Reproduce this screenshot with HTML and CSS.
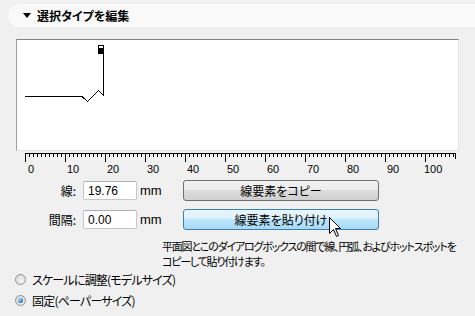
FILE: index.html
```html
<!DOCTYPE html>
<html lang="ja">
<head>
  <meta charset="UTF-8" />
  <title>選択タイプを編集</title>
  <link rel="stylesheet" href="styles.css">
</head>
<body>
  <div class="panel-head">
    <span class="caret"></span>
    <span class="panel-title">選択タイプを編集</span>
  </div>

  <div class="preview">
    <svg width="441" height="110" viewBox="0 0 441 110">
      <polyline points="8,56.5 65,56.5 70.5,61.5 81.5,50.5 87.5,56.5" fill="none" stroke="#000" stroke-width="1" />
      <line x1="86.5" y1="13" x2="86.5" y2="56" stroke="#000" stroke-width="1" />
      <rect x="81.5" y="5.5" width="5" height="3" fill="#fff" stroke="#000" stroke-width="1" />
      <rect x="81" y="9" width="6" height="5" fill="#000" />
    </svg>
  </div>

  <svg class="ruler" width="475" height="24" viewBox="0 0 475 24">
    <defs>
      <pattern id="minor" x="25" y="1" width="4" height="4" patternUnits="userSpaceOnUse">
        <rect x="0" y="0" width="1" height="4" fill="#000" />
      </pattern>
      <pattern id="major" x="25" y="1" width="40" height="9" patternUnits="userSpaceOnUse">
        <rect x="0" y="0" width="1" height="9" fill="#000" />
      </pattern>
    </defs>
    <rect x="25" y="1" width="430" height="1" fill="#000" />
    <rect x="25" y="1" width="430" height="4" fill="url(#minor)" />
    <rect x="25" y="1" width="401" height="9" fill="url(#major)" />
    <rect x="455" y="1" width="1" height="6" fill="#000" />
    <g class="ruler-nums">
      <text x="28" y="21">0</text>
      <text x="67" y="21">10</text>
      <text x="107" y="21">20</text>
      <text x="147" y="21">30</text>
      <text x="187" y="21">40</text>
      <text x="227" y="21">50</text>
      <text x="267" y="21">60</text>
      <text x="307" y="21">70</text>
      <text x="347" y="21">80</text>
      <text x="387" y="21">90</text>
      <text x="424" y="21">100</text>
    </g>
  </svg>

  <div class="fields">
    <div class="field-row">
      <label class="field-label" for="lineLen">線:</label>
      <input class="num-input" id="lineLen" value="19.76">
      <span class="unit">mm</span>
      <button class="btn">線要素をコピー</button>
    </div>
    <div class="field-row">
      <label class="field-label" for="gapLen">間隔:</label>
      <input class="num-input" id="gapLen" value="0.00">
      <span class="unit">mm</span>
      <div class="btn-wrap">
        <button class="btn btn-hot">線要素を貼り付け</button>
        <svg class="cursor" width="13" height="20" viewBox="0 0 13 20">
          <path d="M0.5,0.5 L0.5,16.5 L4.5,12.5 L7.5,19.5 L9.5,18.5 L6.5,11.5 L11.5,11.5 Z" fill="#fff" stroke="#000" stroke-width="1" stroke-linejoin="miter" />
        </svg>
      </div>
    </div>
  </div>

  <p class="hint">平面図とこのダイアログボックスの間で線、円弧、およびホットスポットを<br>コピーして貼り付けます。</p>

  <div class="radios">
    <label class="radio-row"><span class="radio"></span>スケールに調整(モデルサイズ)</label>
    <label class="radio-row"><span class="radio checked"></span>固定(ペーパーサイズ)</label>
  </div>
</body>
</html>
```

FILE: styles.css
```css
body { margin: 0; background: #f0f0f0; font-family: "Liberation Sans", "Noto Sans CJK JP", sans-serif; font-size: 12px; color: #000; overflow: hidden; }
.panel-head { display: flex; align-items: center; margin: 4px 0 0 8px; height: 23px; padding-left: 15px; background: #f9f9f9; border-radius: 12px 0 0 12px; }
.caret { width: 0; height: 0; border-left: 4px solid transparent; border-right: 4px solid transparent; border-top: 5px solid #000; margin-right: 6px; }
.panel-title { font-family: "Noto Sans CJK JP", sans-serif; font-weight: bold; font-size: 12px; font-feature-settings: "palt"; }
.preview { margin: 12px 0 0 16px; width: 441px; height: 110px; background: #fff; border: 1px solid; border-color: #828282 #e3e3e3 #e3e3e3 #a0a0a0; }
.preview svg { display: block; shape-rendering: crispEdges; }
.ruler { display: block; margin-top: 1px; }
.ruler rect { shape-rendering: crispEdges; }
.ruler-nums text { font-family: "Liberation Sans", sans-serif; font-size: 11px; fill: #000; }
.fields { margin-top: 4px; display: flex; flex-direction: column; gap: 8px; }
.field-row { display: grid; grid-template-columns: 83px 57px 43px 196px; align-items: center; height: 21px; }
.field-label { text-align: right; padding-right: 7px; font-family: "Noto Sans CJK JP", sans-serif; font-feature-settings: "palt"; }
.num-input { width: 54px; height: 19px; box-sizing: border-box; border: 1px solid #c3c6cb; border-top-color: #abadb3; border-radius: 2px; padding: 0 0 0 4px; font: 12px "Liberation Sans", sans-serif; background: #fff; }
.unit { font-size: 13px; }
.btn-wrap { position: relative; }
.btn { display: block; width: 196px; height: 21px; padding: 0; border: 1px solid #707070; border-radius: 3px; background: linear-gradient(#f2f2f2, #ebebeb 50%, #dddddd 50%, #cfcfcf); font-family: "Noto Sans CJK JP", sans-serif; font-size: 12px; font-feature-settings: "palt"; color: #000; }
.btn-hot { border-color: #3c7fb1; background: linear-gradient(#eaf6fd, #d9f0fc 50%, #bee6fd 50%, #a7d9f5); }
.cursor { position: absolute; left: 146px; top: 8px; }
.hint { margin: 9px 0 0 162px; font-family: "Noto Sans CJK JP", sans-serif; font-size: 11px; line-height: 15px; letter-spacing: -1.2px; white-space: nowrap; font-feature-settings: "palt"; }
.radios { display: flex; flex-direction: column; }
.radio-row { display: flex; align-items: center; height: 21px; padding-left: 15px; font-family: "Noto Sans CJK JP", sans-serif; letter-spacing: -0.8px; white-space: nowrap; font-feature-settings: "palt"; }
.radio { width: 11px; height: 11px; box-sizing: border-box; border-radius: 50%; border: 1px solid #8e8f8f; background: radial-gradient(circle at 60% 65%, #f4f4f4, #d4d4d4); margin-right: 6px; position: relative; letter-spacing: 0; }
.radio.checked::after { content: ""; position: absolute; left: 2px; top: 2px; width: 5px; height: 5px; border-radius: 50%; background: radial-gradient(circle at 35% 35%, #a8e0ff, #1b5ea8 80%); }
```
